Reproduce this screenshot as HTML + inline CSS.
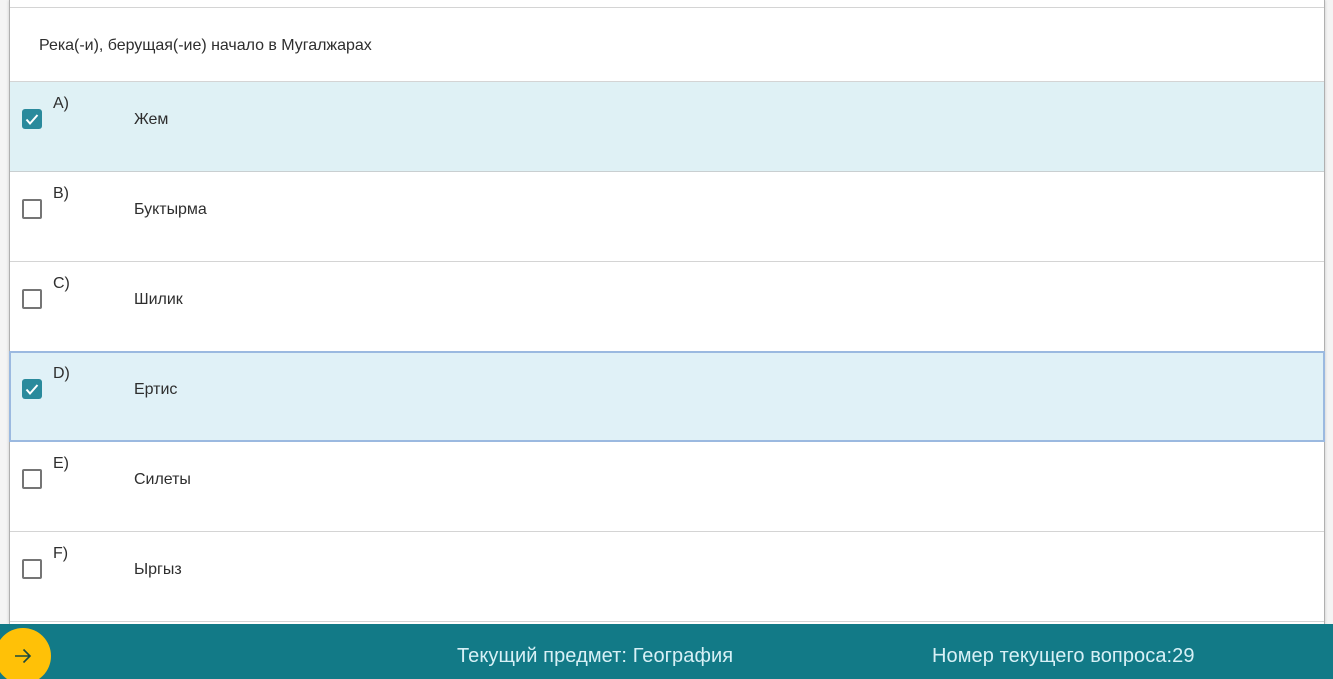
<!DOCTYPE html>
<html lang="ru">
<head>
<meta charset="utf-8">
<style>
html,body{margin:0;padding:0;width:1333px;height:679px;overflow:hidden;background:#f4f4f4;font-family:"Liberation Sans",Arial,sans-serif;color:#2e2e2e}
#wrap{position:absolute;left:0;top:0;width:1333px;height:679px;overflow:hidden}
.abs{position:absolute}
#card{left:9px;top:0;width:1316px;height:624px;background:#fff;border-left:1px solid #b0b0b0;border-right:1px solid #b0b0b0;box-sizing:border-box;box-shadow:0 0 3px rgba(0,0,0,.18)}
.line{position:absolute;left:10px;width:1314px;height:1px;background:#d4d4d4}
.row{position:absolute;left:10px;width:1314px;height:90px}
.sel{background:#dff1f5}
.focus{left:9px;width:1316px;height:91px;box-sizing:border-box;border:2px solid #9bb9e0;background:#e0f1f7}
.t{position:absolute;font-size:16px;line-height:20px;white-space:nowrap;letter-spacing:-.02px}
.cb{position:absolute;left:22px;width:20px;height:20px;box-sizing:border-box;border:2px solid #757575;border-radius:2px;background:#fff}
.cb.on{background:#2a8a9c;border:none;border-radius:3px}
.cb svg{display:block}
#foot{left:0;top:624px;width:1333px;height:55px;background:#127a87;overflow:hidden}
#fab{left:-5px;top:4px;width:56px;height:56px;border-radius:50%;background:#ffc107}
.ft{position:absolute;top:644px;font-size:20px;line-height:24px;color:#d7f0f6;white-space:nowrap;letter-spacing:.08px}
</style>
</head>
<body>
<div id="wrap">
<div class="abs" id="card"></div>
<div class="line" style="top:7px"></div>
<div class="t" style="left:39px;top:36px">Река(-и), берущая(-ие) начало в Мугалжарах</div>

<div class="row sel" style="top:81px"></div>
<div class="row focus abs" style="top:351px"></div>

<div class="line" style="top:81px"></div>
<div class="line" style="top:171px;background:#c9cfd1"></div>
<div class="line" style="top:261px"></div>
<div class="line" style="top:531px"></div>
<div class="line" style="top:621px"></div>

<div class="cb on" style="top:109px"><svg width="20" height="20" viewBox="0 0 20 20"><path d="M4.5 10.5L8 14.5L15.5 6" fill="none" stroke="#fff" stroke-width="2"/></svg></div>
<div class="t" style="left:53px;top:94px">A)</div>
<div class="t" style="left:134px;top:110px">Жем</div>

<div class="cb" style="top:199px"></div>
<div class="t" style="left:53px;top:184px">B)</div>
<div class="t" style="left:134px;top:200px">Буктырма</div>

<div class="cb" style="top:289px"></div>
<div class="t" style="left:53px;top:274px">C)</div>
<div class="t" style="left:134px;top:290px">Шилик</div>

<div class="cb on" style="top:379px"><svg width="20" height="20" viewBox="0 0 20 20"><path d="M4.5 10.5L8 14.5L15.5 6" fill="none" stroke="#fff" stroke-width="2"/></svg></div>
<div class="t" style="left:53px;top:364px">D)</div>
<div class="t" style="left:134px;top:380px">Ертис</div>

<div class="cb" style="top:469px"></div>
<div class="t" style="left:53px;top:454px">E)</div>
<div class="t" style="left:134px;top:470px">Силеты</div>

<div class="cb" style="top:559px"></div>
<div class="t" style="left:53px;top:544px">F)</div>
<div class="t" style="left:134px;top:560px">Ыргыз</div>

<div class="abs" id="foot"><div class="abs" id="fab"></div></div>
<svg class="abs" style="left:13px;top:646px" width="20" height="20" viewBox="0 0 20 20"><path d="M2 10H17M10.5 3.5L17 10L10.5 16.5" fill="none" stroke="#1c4a3e" stroke-width="1.6"/></svg>
<div class="ft" style="left:457px">Текущий предмет: География</div>
<div class="ft" style="left:932px">Номер текущего вопроса:29</div>
</div>
</body>
</html>
